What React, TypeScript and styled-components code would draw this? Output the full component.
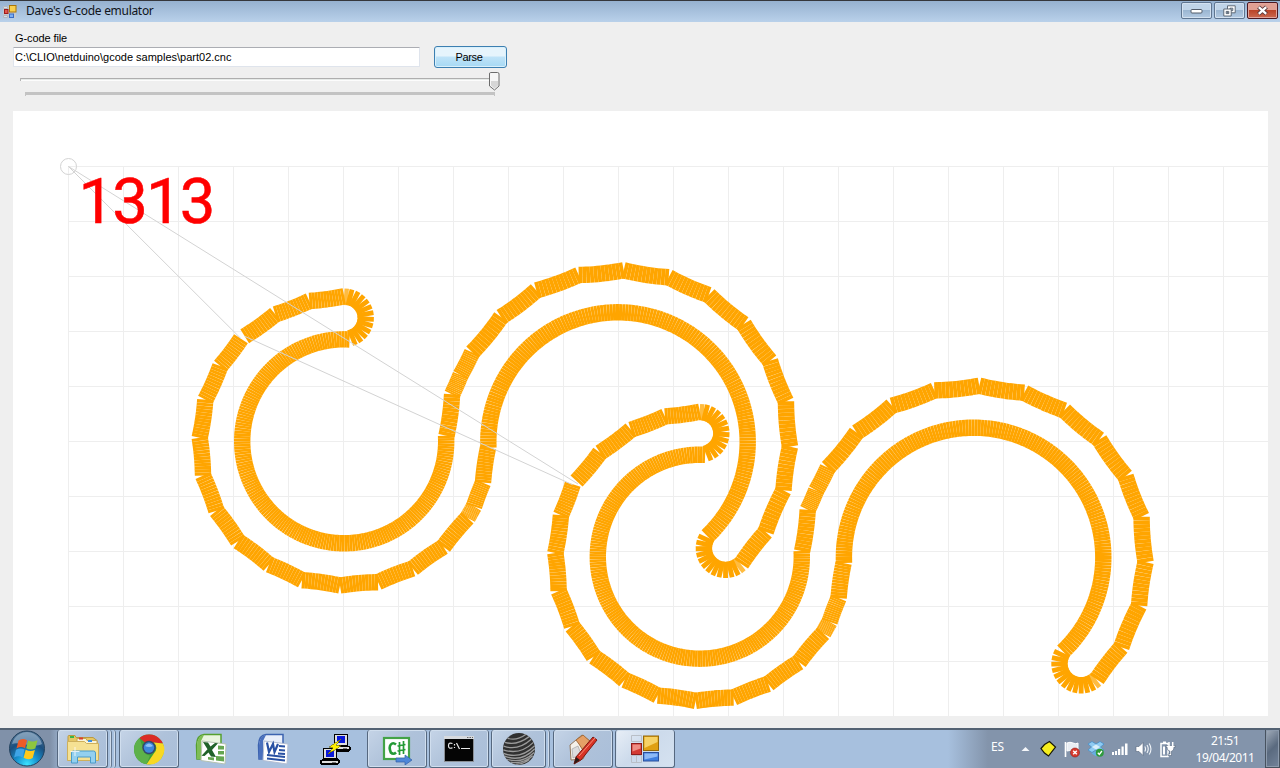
import React from "react";
import styled, { createGlobalStyle, css } from "styled-components";

const GlobalStyle = createGlobalStyle`
  html, body { margin: 0; padding: 0; overflow: hidden; }
  body { width: 1280px; height: 768px; background: #efefef; }
  * { box-sizing: border-box; }
`;

const Screen = styled.div`
  display: flex;
  flex-direction: column;
  width: 1280px;
  height: 768px;
  overflow: hidden;
  background: #efefef;
  color: #000;
  font-family: "Liberation Sans", Arial, sans-serif;
`;

const TitleBar = styled.header`
  display: flex;
  align-items: center;
  height: 22px;
  padding: 0 2px 0 3px;
  border-top: 1px solid #35373c;
  background: linear-gradient(#96b1d0, #b9d1ea);
`;

const Title = styled.h1`
  flex: 1;
  margin: 0 0 0 7px;
  padding-bottom: 1px;
  font: 400 12px/20px "Noto Sans", "Open Sans", sans-serif;
  letter-spacing: -0.3px;
  color: #10141a;
`;

const WindowButtons = styled.div`
  display: flex;
  align-self: flex-start;
  gap: 2px;
  padding-top: 1px;
`;

const WindowButton = styled.button<{ $close?: boolean }>`
  display: flex;
  align-items: center;
  justify-content: center;
  width: 31px;
  height: 17px;
  padding: 0;
  border: 1px solid ${(p) => (p.$close ? "#4c1820" : "#5f7590")};
  border-radius: 2px;
  box-shadow: inset 0 0 0 1px ${(p) => (p.$close ? "#e2a59c" : "#d3e1f0")};
  background: ${(p) =>
    p.$close
      ? "linear-gradient(#e0a093 0 45%, #bb4428 50%, #cb6a50)"
      : "linear-gradient(#c0d4e8 0 45%, #9bb6d2 50%, #b3cae2)"};
`;

const Client = styled.main`
  display: flex;
  flex-direction: column;
  height: 706px;
  padding: 9px 12px 12px 13px;
`;

const FieldLabel = styled.label`
  height: 15px;
  padding-left: 2px;
  font-size: 11px;
  line-height: 15px;
  letter-spacing: -0.1px;
`;

const FieldRow = styled.div`
  display: flex;
  align-items: center;
  gap: 14px;
  height: 22px;
`;

const PathField = styled.input`
  width: 407px;
  height: 20px;
  padding: 0 0 0 1px;
  border: 1px solid #dfe4ec;
  border-top-color: #abadb3;
  border-radius: 1px;
  background: #fff;
  font: 11px "Liberation Sans", Arial, sans-serif;
  color: #000;
`;

const ParseButton = styled.button`
  width: 73px;
  height: 22px;
  padding: 0 3px 0 0;
  border: 1px solid #3c7fb1;
  border-radius: 3px;
  box-shadow: inset 0 0 0 1px #d9f0fb;
  background: linear-gradient(#e6f4fc 0 45%, #bfe3f8 50%, #a6d9f4);
  font: 11px "Liberation Sans", Arial, sans-serif;
  letter-spacing: -0.3px;
  color: #000;
`;

const Slider = styled.svg`
  display: block;
  flex: none;
  width: 507px;
  height: 43px;
`;

const Plot = styled.svg`
  display: block;
  flex: none;
  width: 1255px;
  height: 605px;
  background: #fff;
  font-family: Roboto, sans-serif;
`;

const Taskbar = styled.footer`
  display: flex;
  height: 40px;
  border-top: 2px solid #4b5968;
  border-top-color: #536273;
  background: linear-gradient(90deg, #8091a9 0 50px, #a7c0de 66px 948px, #8394ab 988px);
`;

const StartSlot = styled.div`
  display: flex;
  align-items: center;
  width: 57px;
  padding-left: 8px;
`;

const Tasks = styled.nav`
  display: flex;
  flex: 1;
  gap: 2px;
`;

const taskFrame = css`
  border: 1px solid #56687f;
  border-top: 0;
  border-radius: 3px;
  box-shadow: inset 0 0 0 1px #d0deee;
`;

const Task = styled.button<{ $width: number; $framed?: boolean; $active?: boolean; $gap?: number }>`
  display: flex;
  align-items: center;
  justify-content: center;
  flex: none;
  width: ${(p) => p.$width}px;
  height: 38px;
  margin: 0 0 0 ${(p) => p.$gap ?? 0}px;
  padding: 0;
  border: 0;
  background: none;
  ${(p) => p.$framed && taskFrame}
  ${(p) =>
    p.$framed &&
    css`
      background: ${p.$active
        ? "linear-gradient(135deg, #e8eff7, #ccdaeb 45%, #d5e2f0)"
        : "linear-gradient(135deg, #c5d4e7, #afc2da 50%, #a9bed9)"};
    `}
`;

const StackEdge = styled.span`
  flex: none;
  width: 4px;
  height: 38px;
  margin-left: -2px;
  border-right: 1px solid #64778f;
  border-radius: 0 3px 3px 0;
  box-shadow: inset -1px 0 0 #cfdcec;
`;

const Tray = styled.div`
  display: flex;
  align-items: center;
  flex: none;
  width: 289px;
  color: #fff;
  font: 12px/17px "Noto Sans", "Open Sans", sans-serif;
  letter-spacing: -0.5px;
`;

const Language = styled.span`
  width: 27px;
  padding-bottom: 6px;
  letter-spacing: -0.2px;
`;

const TrayIcons = styled.div`
  display: flex;
  align-items: center;
  gap: 6px;
`;

const Clock = styled.div`
  flex: 1;
  padding-left: 8px;
  text-align: center;
  white-space: nowrap;
`;

const ShowDesktop = styled.div`
  width: 15px;
  height: 38px;
  border: 1px solid #47525f;
  border-top: 0;
  box-shadow: inset 0 0 0 1px #8c9aac;
  background: linear-gradient(135deg, #a2adbb, #5a6a7f 50%, #73839a);
`;

/* ---------- tool path ---------- */

type Pt = [number, number];

const chain = (pts: Pt[]) =>
  pts.slice(1).map((p, i) => {
    const q = pts[i];
    return `M${q[0].toFixed(2)} ${q[1].toFixed(2)}L${p[0].toFixed(2)} ${p[1].toFixed(2)}`;
  });

/* Arc round a centre, given by start and end angle in degrees. */
const round = (c: Pt, r: number, a: number, b: number, n: number): string[] =>
  chain(
    Array.from({ length: n + 1 }, (_, i) => {
      const t = ((a + ((b - a) * i) / n) * Math.PI) / 180;
      return [c[0] + r * Math.cos(t), c[1] + r * Math.sin(t)] as Pt;
    })
  );

/* Facets between successive vertices, each sagging towards the centre. */
const facets = (c: Pt, verts: Pt[], n = 12): string[] =>
  verts.slice(1).flatMap((b, k) => {
    const a = verts[k];
    const dx = b[0] - a[0];
    const dy = b[1] - a[1];
    const len = Math.hypot(dx, dy);
    let nx = -dy / len;
    let ny = dx / len;
    if (nx * (c[0] - a[0]) + ny * (c[1] - a[1]) < 0) {
      nx = -nx;
      ny = -ny;
    }
    const sag = (len * len) / 2050;
    return chain(
      Array.from({ length: n + 1 }, (_, i) => {
        const t = i / n;
        const h = 4 * sag * t * (1 - t);
        return [a[0] + dx * t + nx * h, a[1] + dy * t + ny * h] as Pt;
      })
    );
  });

const LEFT: Pt = [344.2, 441.3];
const RIGHT: Pt = [618, 442];
const HOOK_TOP: Pt = [344.7, 317.8];
const HOOK_END: Pt = [725.5, 548.3];

const topEdge: Pt[] = [[344.2, 296.3], [309.3, 301], [275.3, 314.3]];
const lowerEdge: Pt[] = [
  [205.3, 399.7], [199.7, 437.7], [203.0, 475.7], [216.4, 510.9], [238.1, 541.3],
  [269, 564.6], [302, 580.2], [340, 585.5], [378, 582.2], [412.7, 568.5], [443.4, 546.8],
  [467.6, 517.9], [474.0, 506.5], [483, 482.7], [488, 447.7],
];
const rightEdge: Pt[] = [
  [446.5, 435.7], [452.1, 394.3], [460.6, 375], [472.2, 352.3], [501, 317], [536.3, 290.3],
  [578.7, 275], [623.7, 270.3], [668.7, 277.3], [708.7, 295], [743.7, 324], [770, 360.7],
  [786, 401.3], [790, 446.7], [783.5, 490.3], [765.7, 532], [741.2, 564],
];

const common = [
  ...facets(LEFT, lowerEdge),
  ...facets(RIGHT, rightEdge),
  ...round(LEFT, 102, -87, -363.2, 190),
  ...round(RIGHT, 129.7, -182.5, 46.5, 170),
  ...round(HOOK_TOP, 21.1, 75, -82, 12),
  ...round(HOOK_END, 21.7, 211, 58, 12),
];
const caps = [
  ...round(HOOK_TOP, 21.1, -80, -92, 1),
  ...round(HOOK_END, 21.7, 58, 46, 1),
];

const first = [
  ...common,
  ...facets(LEFT, [...topEdge, [244.7, 336.3]]),
  ...facets(LEFT, [[241, 338.7], [220.3, 366], lowerEdge[0]]),
];
const second = [
  ...common,
  ...facets(LEFT, [...topEdge, [244.4, 337.2], [220.9, 365.6]]),
  ...facets(LEFT, [[217.1, 368.9], lowerEdge[0]]),
];

function Part({ segments, dx = 0, dy = 0 }: { segments: string[]; dx?: number; dy?: number }) {
  return (
    <g transform={`translate(${dx} ${dy})`} stroke="#ffa500" strokeWidth="16.4" fill="none">
      {segments.map((d, i) => (
        <path key={i} d={d} />
      ))}
      {caps.map((d, i) => (
        <path key={`c${i}`} d={d} opacity=".75" />
      ))}
    </g>
  );
}

function PlotView() {
  const cols = Array.from({ length: 22 }, (_, i) => 68.5 + 55 * i);
  const rows = Array.from({ length: 10 }, (_, i) => 166.5 + 55 * i);
  return (
    <Plot viewBox="13 111 1255 605">
      <g stroke="#eeeeee">
        {cols.map((x) => (
          <path key={x} d={`M${x} 166V716`} />
        ))}
        {rows.map((y) => (
          <path key={y} d={`M68 ${y}H1268`} />
        ))}
      </g>
      <Part segments={first} />
      <Part segments={second} dx={355.6} dy={115.4} />
      <g fill="none" stroke="#d3d3d3">
        <circle cx="68.5" cy="166.5" r="8" />
        <path d="M68.5 166.5L241 338.7M244.7 336.3L572.7 484.8M578 484L68.5 166.5" />
      </g>
      <text x="78.500" y="223" fill="#f00" stroke="#f00" strokeWidth=".5" fontSize="63.500" letterSpacing="-1.9">
        1313
      </text>
    </Plot>
  );
}

/* ---------- icons ---------- */

const FormIcon = ({ size }: { size: number }) => (
  <svg width={size} height={size} viewBox="0 0 28 28">
    <path d="M.5.5h10v6H.5zM.5 20.500h10v7H.5zM5.500 20v7" fill="none" stroke="#b9bfc7" />
    <rect x=".5" y="8.500" width="10" height="11" fill="#d33a33" stroke="#8e1d1d" />
    <path d="M1.500 9.500h8v4l-8 3z" fill="#ee8d84" />
    <rect x="12.500" y="1" width="15" height="14.500" fill="#e0a012" stroke="#93690d" />
    <path d="M13.500 2h13v5l-13 6z" fill="#f6d266" />
    <rect x="12.500" y="17.500" width="15" height="8.500" fill="#3f7fe0" stroke="#2b4f9b" />
    <path d="M13.500 18.500h13v3l-13 3z" fill="#8db9f6" />
  </svg>
);

const SmallFormIcon = () => (
  <svg width="16" height="16" viewBox="0 0 16 16">
    <path d="M0 2h13v12H0z" fill="#c4c9d0" />
    <path d="M.5 2.500h4v2h-4zM.5 11.500h4v2h-4z" fill="#d9dde2" stroke="#b2b8c1" />
    <rect x="1.500" y="5.500" width="3.500" height="4" fill="#e0584e" stroke="#a01b1b" />
    <rect x="6.500" y="1.500" width="6.500" height="6.500" fill="#f8cf4e" stroke="#a97508" />
    <rect x="6.500" y="10" width="4" height="3.500" fill="#7db0f5" stroke="#3a6cc4" />
  </svg>
);

const StartOrb = () => (
  <svg width="38" height="38" viewBox="0 0 38 38">
    <defs>
      <radialGradient id="orb" cx=".5" cy=".95" r=".9">
        <stop offset="0" stopColor="#3ce4ff" />
        <stop offset=".35" stopColor="#1792cf" />
        <stop offset=".7" stopColor="#1b4f7f" />
        <stop offset="1" stopColor="#4a6f92" />
      </radialGradient>
    </defs>
    <circle cx="19" cy="18.500" r="17.500" fill="url(#orb)" stroke="#24435f" />
    <path d="M4 14C6 6 13 2 19 2s13 4 15 12C26 19 12 11 4 14z" fill="#b9d0e2" opacity=".5" />
    <path d="M10.500 10.500q4-3 8.500-.3l-2 8q-4-2.500-8.500.2z" fill="#ee5c27" />
    <path d="M20.200 10.500q4.500 2.300 9.300-.3l-2.200 8.300q-4.500 2.300-9.100-.2z" fill="#8ec63f" />
    <path d="M8 19.800q4.500-2.500 8.500-.2l-2 7.800q-4-2.300-8.400.2z" fill="#3fa4e6" />
    <path d="M17.700 19.800q4.500 2.500 9.200.2l-2.200 8q-4.700 2.500-9.100-.2z" fill="#ffc91a" />
  </svg>
);

const ExplorerIcon = () => (
  <svg width="34" height="32" viewBox="0 0 34 32">
    <path d="M2 3.500q0-1 1-1h6l1 2h17l4 3v20H2z" fill="#e6c765" stroke="#bb9a41" />
    <rect x="4" y="3" width="4" height="2" fill="#38b54a" />
    <path d="M11 5.500h9l1 2h10v5H11z" fill="#f8f4dc" stroke="#c6a854" />
    <rect x="13" y="4.500" width="4" height="2" fill="#dd3b2d" />
    <rect x="22" y="7" width="4" height="2" fill="#3c8fe0" />
    <path d="M1.500 8.500h17l2 2h12v17h-31z" fill="#f5e193" stroke="#ceb05b" />
    <path d="M5.500 30V20q0-2 2-2h20q2 0 2 2v10h-5v-6h-13v6z" fill="#93d0ef" stroke="#4a9bc9" />
    <path d="M9 14v9M4.500 18.500h9" stroke="#fff" opacity=".8" />
  </svg>
);

const ChromeIcon = () => (
  <svg width="32" height="32" viewBox="0 0 32 32">
    <circle cx="16" cy="16.500" r="15" fill="#3f9f3b" />
    <path d="M6.500 5A15 15 0 0 1 30 10.500L16 9a6.500 6.500 0 0 0-3.500 1z" fill="#db2b25" />
    <path d="M30 10.500A15 15 0 0 1 13.500 31.300l7.500-11A7 7 0 0 0 20.500 9.500z" fill="#f8d823" />
    <path d="M6.500 5l4 12A7 7 0 0 0 17 22.500l-3.500 8.800A15 15 0 0 1 6.500 5z" fill="#5db14a" />
    <circle cx="16" cy="14.500" r="6.700" fill="#35476a" />
    <circle cx="16" cy="14.500" r="5.200" fill="#3d86dc" />
    <path d="M12 13q4-5 8 0-4 2-8 0z" fill="#8dc1f4" />
  </svg>
);

const ExcelIcon = () => (
  <svg width="32" height="32" viewBox="0 0 32 32">
    <path d="M1.500 12Q2 2 9 1.500h17V26H2z" fill="#eaf5df" stroke="#55a02f" strokeWidth="1.500" />
    <path d="M2 12Q3 2 9 2l-3 6v18H2z" fill="#7ebd56" />
    <path d="M7 8l24 3-1 20-24-3.500z" fill="#fff" stroke="#b5c2b0" />
    <path d="M8 9l5 .5 2.500 4L20 10l3 .3-6 6.700 4 7-5-.5-2.500-4-4 3.500-3-.3 6-6.500z" fill="#21622a" />
    <path d="M23 12.500l6 .5v3.500h-6zM23 18h6v3.500h-6zM21 23l8 .5v5l-8-1zM13 24l6 .5v3L13 26.500z" fill="#65a650" />
  </svg>
);

const WordIcon = () => (
  <svg width="32" height="32" viewBox="0 0 32 32">
    <path d="M1.500 12Q2 2 9 1.500h17V26H2z" fill="#e9effa" stroke="#3c63b0" strokeWidth="1.500" />
    <path d="M2 12Q3 2 9 2l-3 6v18H2z" fill="#4a70bd" />
    <path d="M7 8l24 3-1 20-24-3.500z" fill="#fff" stroke="#b2bdd2" />
    <path d="M10 9.500l2 9.500 4-8 1.500 8 3.500-8" fill="none" stroke="#2951a3" strokeWidth="2.200" />
    <path d="M22 13l6 .5M22 17l6 .5M21 20.500l7 .5M10 22l18 2M10 25.500l18 2" stroke="#2951a3" strokeWidth="1.800" />
  </svg>
);

const PuttyIcon = () => (
  <svg width="32" height="32" viewBox="0 0 32 32" shapeRendering="crispEdges">
    <path d="M15 1h14v12l3 1v3l-3 2H17l-3-2v-3l1-1z" fill="#000" />
    <path d="M16 2h12v10H16zM16 14h14v2H16z" fill="#dedede" />
    <path d="M18 3h8v7h-8z" fill="#0918d8" />
    <path d="M24 15h4v1h-4z" fill="#777" />
    <path d="M4 15h14v10l3 2v3l-3 2H2l-1-2v-3l3-1z" fill="#000" />
    <path d="M5 16h12v9H5zM3 28h16v2H3z" fill="#dedede" />
    <path d="M7 17h8v7H7z" fill="#0918d8" />
    <path d="M13 29h4v1h-4z" fill="#777" />
    <path d="M22 6L10 14l4 1-5 6 13-8-5-1z" fill="#ffef00" stroke="#6d6600" strokeWidth=".6" />
  </svg>
);

const CSharpIcon = () => (
  <svg width="32" height="32" viewBox="0 0 32 32">
    <rect x="3" y="5" width="25" height="21" fill="#fff" stroke="#43a347" strokeWidth="2.200" />
    <path d="M15 11.500q-3-2.500-5.200 0t0 8q2.500 2.500 5.200 0" fill="none" stroke="#239a35" strokeWidth="2.600" />
    <path d="M18.500 9v13M22.500 8v13M16.500 13l8-1.500M16.500 18l8-1.500" stroke="#239a35" strokeWidth="1.700" />
    <path d="M15 25h9v-3l7 5-7 5v-3h-9z" fill="#4d86d9" stroke="#315fa6" strokeWidth=".7" />
  </svg>
);

const ConsoleIcon = () => (
  <svg width="32" height="28" viewBox="0 0 32 28">
    <rect x="1.500" y="1.500" width="29" height="25" fill="#050505" stroke="#8b8f94" />
    <path d="M1 1h30v3H1z" fill="#d7dade" />
    <path d="M24 2.500h1.500M26.500 2.500H28M29 2.500h1" stroke="#666" />
    <path d="M9.500 8.500q-4-1.500-4 2.200t4 2M11.500 9v1.500M11.500 12v1M13.500 8l3 6M18 13.500h9" fill="none" stroke="#e8e8e8" strokeWidth="1.200" />
  </svg>
);

const SphereIcon = () => (
  <svg width="34" height="34" viewBox="0 0 34 34">
    <circle cx="17" cy="17" r="16" fill="#303030" />
    <g fill="none" stroke="#9a9a9a" strokeWidth="1.300" transform="rotate(-12 17 17)">
      <path d="M8 4q8 5 19-0M4.500 7.500q11 6 25-.5M2.500 11q13 8 28.500-1M1.500 14.500q15 9 31-1M1 18q15 10 32-1M1.500 21q15 10 31-1M3 24.500q14 8 28-1M6 28q12 5 23-1.500M11 31.500q8 1 14-2" />
    </g>
  </svg>
);

const PencilHouseIcon = () => (
  <svg width="32" height="32" viewBox="0 0 32 32">
    <path d="M3 12L15 2l9 7-8 17-12 1z" fill="#f4f1ea" stroke="#94775a" />
    <path d="M9 7L16 2l9 8-8 9-5-8z" fill="#e5a066" stroke="#a26c3d" />
    <path d="M5 16l6-3 3 8-8 4z" fill="#ddd" stroke="#999" strokeWidth=".6" />
    <path d="M9 24L26 4l4 3-16 20-7 4z" fill="#d83224" stroke="#7a1811" />
    <path d="M9 24l4 3-6 4z" fill="#2a1a17" />
    <path d="M12 23L28 5" stroke="#f68e77" />
  </svg>
);

const MinimizeGlyph = () => (
  <svg width="13" height="6" viewBox="0 0 13 6">
    <rect x="1" y="1.500" width="11" height="3.500" rx="1" fill="#fff" stroke="#535d6b" />
  </svg>
);

const RestoreGlyph = () => (
  <svg width="13" height="12" viewBox="0 0 13 12">
    <path d="M4.500.8h7.700v7h-7.700zM7 3.200h2.800v2.400H7z" fill="#fff" fillRule="evenodd" stroke="#535d6b" strokeWidth=".9" />
    <path d="M.8 4h7.400v7H.8zM3.200 6.400h2.600v2.200H3.200z" fill="#fff" fillRule="evenodd" stroke="#535d6b" strokeWidth=".9" />
  </svg>
);

const CloseGlyph = () => (
  <svg width="13" height="11" viewBox="0 0 13 11">
    <path d="M2.500 2l8 7M10.500 2l-8 7" stroke="#59393c" strokeWidth="4.200" />
    <path d="M2.800 2.200l7.400 6.600M10.200 2.200L2.800 8.800" stroke="#fff" strokeWidth="2.300" />
  </svg>
);

const TrayGlyph = ({ children, width = 18 }: { children: React.ReactNode; width?: number }) => (
  <svg width={width} height="18" viewBox={`0 0 ${width} 18`}>
    {children}
  </svg>
);

function TrayGlyphs() {
  return (
    <TrayIcons>
      <TrayGlyph width={15}>
        <path d="M3.500 11L7.500 7l4 4z" fill="#f4f6f9" />
      </TrayGlyph>
      <TrayGlyph>
        <path d="M2 8.500L5.500 4.500l5-3 6 5.500L9.500 16 5.500 13z" fill="#f6ee1e" stroke="#151505" strokeWidth="1.200" />
      </TrayGlyph>
      <TrayGlyph>
        <path d="M2.500 2v15" stroke="#fff" strokeWidth="1.600" />
        <path d="M4 3q3-1.500 6 0t5 0v8q-3 1-5.500 0T4 11z" fill="#e8edf3" stroke="#fff" />
        <circle cx="12" cy="12.500" r="4.500" fill="#d63a2e" stroke="#8f1f18" strokeWidth=".6" />
        <path d="M10.200 10.700l3.600 3.600M13.800 10.700l-3.600 3.600" stroke="#fff" strokeWidth="1.400" />
      </TrayGlyph>
      <TrayGlyph>
        <path d="M5 1.500L9 4l4-2.500L17 4l-3.500 3L17 10l-4 2.500L9 9.800 5 12.500 1 10l3.500-3L1 4z" fill="#8fcbf2" stroke="#3f8cca" strokeWidth=".7" />
        <path d="M9 4.500l4 2.500-4 2.500L5 7z" fill="#d8eefb" />
        <path d="M4.500 13.500L9 10.800l4 2.500-4 3z" fill="#64aee3" />
        <circle cx="12.800" cy="12.800" r="4" fill="#2e9b3c" />
        <path d="M10.800 12.800l1.500 1.700 2.600-3.500" fill="none" stroke="#fff" strokeWidth="1.300" />
      </TrayGlyph>
      <TrayGlyph>
        <path d="M1 12h2v3H1zM4 11h2v4H4zM7 9h2.200v6H7zM10.500 6.500h2.200v8.500h-2.200zM14 3.500h2.500V15H14z" fill="#fff" />
      </TrayGlyph>
      <TrayGlyph>
        <path d="M1 6.500h3L8 2.500v13L4 11.500H1z" fill="#fff" stroke="#58677c" strokeWidth=".6" />
        <path d="M9.800 6.500q1.500 2.500 0 5M12 5q2.500 4 0 8M14.200 3.500q3.500 5.500 0 11" fill="none" stroke="#f1f5f9" strokeWidth="1.100" />
      </TrayGlyph>
      <TrayGlyph>
        <path d="M2 3.500h7v13H2z" fill="none" stroke="#fff" strokeWidth="1.500" />
        <path d="M4 1.500h3v2H4zM4 6.500h2v8H4z" fill="#fff" />
        <path d="M7 5.500h9.500v1.500H15q0 4-2.500 4.200V15.500H9V14h2v-2.800Q8 11 8 7H7z" fill="#fff" stroke="#53637a" strokeWidth=".6" />
        <path d="M10 2v4M13.700 2v4" stroke="#fff" strokeWidth="1.500" />
      </TrayGlyph>
    </TrayIcons>
  );
}

export default function App() {
  return (
    <Screen>
      <GlobalStyle />
      <TitleBar>
        <SmallFormIcon />
        <Title>Dave's G-code emulator</Title>
        <WindowButtons>
          <WindowButton aria-label="Minimize"><MinimizeGlyph /></WindowButton>
          <WindowButton aria-label="Restore"><RestoreGlyph /></WindowButton>
          <WindowButton aria-label="Close" $close><CloseGlyph /></WindowButton>
        </WindowButtons>
      </TitleBar>

      <Client>
        <FieldLabel htmlFor="file">G-code file</FieldLabel>
        <FieldRow>
          <PathField id="file" readOnly value={"C:\\CLIO\\netduino\\gcode samples\\part02.cnc"} />
          <ParseButton>Parse</ParseButton>
        </FieldRow>
        <Slider viewBox="13 68 507 43">
          <path d="M20 78.500H494" stroke="#aeaeae" />
          <path d="M20.500 78v3" stroke="#b4b4b4" />
          <path d="M21 79.500H494" stroke="#e6eae8" />
          <path d="M21 80.500H494" stroke="#fcfcfc" />
          <path d="M25 92h470v4h-1v-1H26v1h-1z" fill="#c3c3c3" />
          <path d="M490.500 72.500h7q1.500 0 1.500 1.500V86l-4.500 4-5-4V74q0-1.500 1-1.500z" fill="#f6f6f6" stroke="#6c6c6c" />
          <path d="M491 81h7v4.500l-3.500 3-3.500-3z" fill="#d6d6d6" />
        </Slider>
        <PlotView />
      </Client>

      <Taskbar>
        <StartSlot><StartOrb /></StartSlot>
        <Tasks>
          <Task $width={51} $framed><ExplorerIcon /></Task>
          <StackEdge />
          <StackEdge />
          <Task $width={60} $framed $gap={1}><ChromeIcon /></Task>
          <Task $width={60}><ExcelIcon /></Task>
          <Task $width={60}><WordIcon /></Task>
          <Task $width={60}><PuttyIcon /></Task>
          <Task $width={60} $framed><CSharpIcon /></Task>
          <Task $width={60} $framed><ConsoleIcon /></Task>
          <Task $width={55} $framed><SphereIcon /></Task>
          <StackEdge />
          <Task $width={60} $framed $gap={1}><PencilHouseIcon /></Task>
          <Task $width={60} $framed $active><FormIcon size={28} /></Task>
        </Tasks>
        <Tray>
          <Language>ES</Language>
          <TrayGlyphs />
          <Clock>
            <div>21:51</div>
            <div>19/04/2011</div>
          </Clock>
          <ShowDesktop />
        </Tray>
      </Taskbar>
    </Screen>
  );
}
